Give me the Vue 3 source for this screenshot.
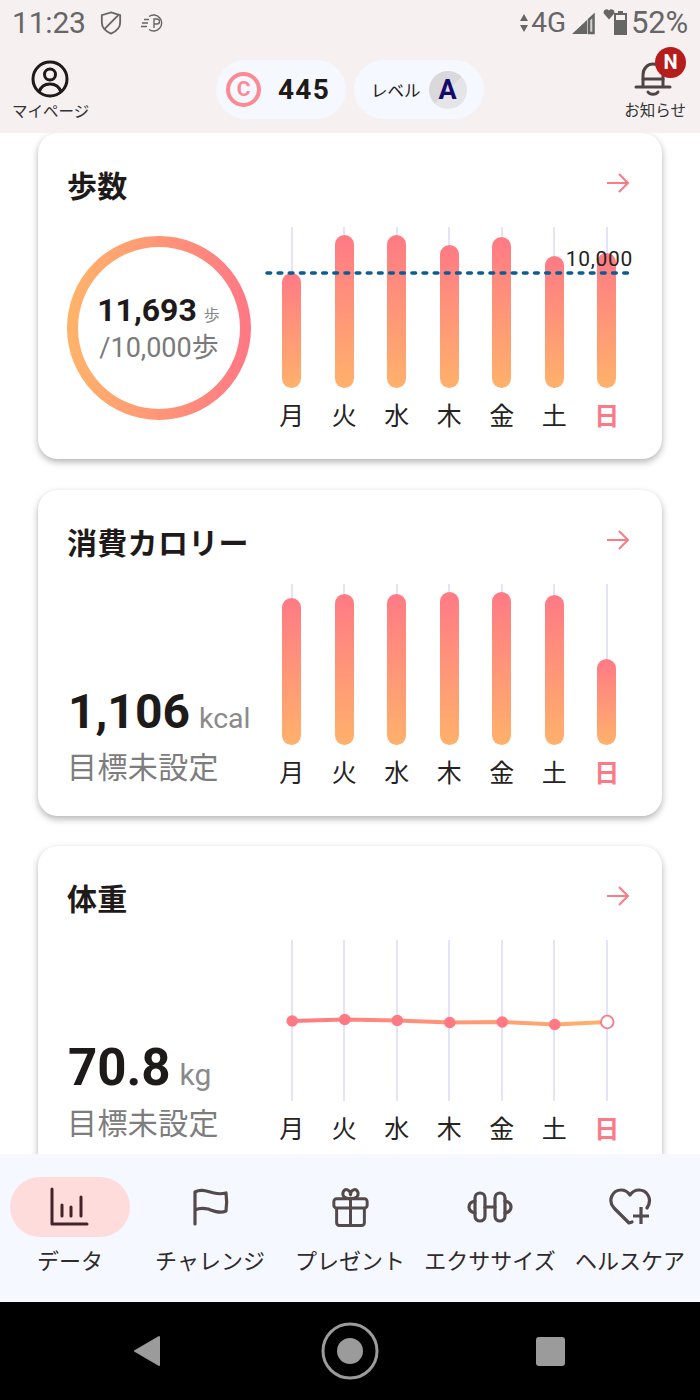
<script setup>
const days = ['月', '火', '水', '木', '金', '土', '日']
const stepBars = [115, 153, 153, 143, 151, 132, 135]
const calBars = [147, 151, 151, 153, 153, 150, 86]
// 体重の折れ線 (x は列の中心)
const weightY = [81, 79.5, 80.5, 82.5, 82, 84.5, 82]
const weightPts = weightY.map((y, i) => ({ x: 26.25 + i * 52.5, y }))
const weightLine = weightPts.map((p) => p.x + ',' + p.y).join(' ')
const tabs = ['データ', 'チャレンジ', 'プレゼント', 'エクササイズ', 'ヘルスケア']
</script>

<template>
  <div class="page">
    <header class="top">
      <div class="status">
        <span class="time">11:23</span>
        <svg class="st-shield" width="22" height="26" viewBox="0 0 24 27" fill="none" stroke="#666" stroke-width="2">
          <path d="M12 2 L22 5 V13 C22 19 17 23 12 25 C7 23 2 19 2 13 V5 Z" />
          <path d="M5 20 L20 5" />
        </svg>
        <svg class="st-p" width="24" height="20" viewBox="0 0 24 20" fill="none" stroke="#666" stroke-width="1.4">
          <path d="M9 3.5 A8 8 0 1 1 9 16.5" />
          <path d="M14 15 V6 H17 A2.5 2.5 0 0 1 17 11 H14" />
          <path d="M4 6.5 H9 M2 10 H8 M1 13.5 H7" />
        </svg>
        <div class="st-right">
          <svg width="10" height="24" viewBox="0 0 10 24" fill="#666"><path d="M5 3 L9 10 H1 Z M1 14 H9 L5 21 Z" /></svg>
          <span class="st-txt">4G</span>
          <svg class="st-signal" width="24" height="24" viewBox="0 0 24 24"><path d="M0 23 L15 9 V23 Z" fill="#666" /><path d="M15 9 L23 1 V23 H15 Z" fill="#666" opacity=".25" /><path d="M21.5 4.5 V22 H17 V8.5 Z" fill="none" stroke="#666" stroke-width="2.4" /></svg>
          <svg class="st-heart" width="12" height="12" viewBox="0 0 12 12" fill="#666"><path d="M6 11.5 L.8 5.5 A3 3 0 0 1 6 2.6 A3 3 0 0 1 11.2 5.5 Z" /></svg>
          <svg width="15" height="24" viewBox="0 0 15 24"><path d="M5 0 H10 V2 H14 V24 H1 V2 H5 Z" fill="#666" /><rect x="3" y="4" width="9" height="5" fill="#f6f0f1" /></svg>
          <span class="st-txt pct">52%</span>
        </div>
      </div>
      <div class="bar">
        <div class="side left">
          <svg class="me" width="40" height="40" viewBox="0 0 40 40" fill="none" stroke="#1e1a1a" stroke-width="3">
            <circle cx="20" cy="20" r="17" />
            <circle cx="20" cy="15.5" r="5.5" />
            <path d="M9 33 C11 27 15 25 20 25 C25 25 29 27 31 33" />
          </svg>
          <span class="side-label">マイページ</span>
        </div>
        <div class="pills">
          <div class="pill coin">
            <span class="coin-mark">C</span>
            <span class="coin-num">445</span>
          </div>
          <div class="pill level">
            <span class="level-txt">レベル</span>
            <span class="level-badge">A</span>
          </div>
        </div>
        <div class="side right">
          <div class="bell">
            <svg width="40" height="40" viewBox="0 0 40 40" fill="none" stroke="#4f4444" stroke-width="3" stroke-linecap="round">
              <path d="M10 28 V17 C10 10 15 6 20 6 C25 6 30 10 30 17 V28" />
              <path d="M3 29 H37" />
              <path d="M10 21 H30" />
              <path d="M15 34 C17 37 23 37 25 34" />
            </svg>
            <span class="badge">N</span>
          </div>
          <span class="side-label">お知らせ</span>
        </div>
      </div>
    </header>

    <main class="list">
      <section class="card">
        <div class="card-head">
          <h2>歩数</h2>
          <svg class="arrow" width="24" height="22" viewBox="0 0 24 22" fill="none" stroke="#fb7a86" stroke-width="2"><path d="M1 11 H22 M13 2 L22 11 L13 20" /></svg>
        </div>
        <div class="card-body mid">
          <div class="ring-box">
            <svg class="ring" width="184" height="184" viewBox="0 0 184 184" fill="none">
              <defs>
                <linearGradient id="ringGrad" x1="0" y1="0" x2="1" y2="0">
                  <stop offset="0" stop-color="#ffb26a" />
                  <stop offset="1" stop-color="#ff7984" />
                </linearGradient>
              </defs>
              <circle cx="92" cy="92" r="86.5" stroke="url(#ringGrad)" stroke-width="11" />
            </svg>
            <div class="ring-main"><b>11,693</b><small>歩</small></div>
            <div class="ring-sub">/10,000歩</div>
          </div>
          <div class="chart">
            <div class="col" v-for="(d, i) in days" :key="d">
              <div class="track"><i class="grid-line"></i><i class="fill" :style="{ height: stepBars[i] + 'px' }"></i></div>
              <span class="day" :class="{ sun: i === 6 }">{{ d }}</span>
            </div>
            <svg class="goal" width="372" height="6" viewBox="0 0 372 6"><path d="M2 3 H362.4" stroke="#0b5c93" stroke-width="3.6" stroke-linecap="round" stroke-dasharray="3.6 7.55" /></svg>
            <span class="goal-txt">10,000</span>
          </div>
        </div>
      </section>

      <section class="card">
        <div class="card-head">
          <h2>消費カロリー</h2>
          <svg class="arrow" width="24" height="22" viewBox="0 0 24 22" fill="none" stroke="#fb7a86" stroke-width="2"><path d="M1 11 H22 M13 2 L22 11 L13 20" /></svg>
        </div>
        <div class="card-body">
          <div class="nums">
            <div class="value"><b>1,106</b><small>kcal</small></div>
            <div class="target">目標未設定</div>
          </div>
          <div class="chart">
            <div class="col" v-for="(d, i) in days" :key="d">
              <div class="track"><i class="grid-line"></i><i class="fill" :style="{ height: calBars[i] + 'px' }"></i></div>
              <span class="day" :class="{ sun: i === 6 }">{{ d }}</span>
            </div>
          </div>
        </div>
      </section>

      <section class="card">
        <div class="card-head">
          <h2>体重</h2>
          <svg class="arrow" width="24" height="22" viewBox="0 0 24 22" fill="none" stroke="#fb7a86" stroke-width="2"><path d="M1 11 H22 M13 2 L22 11 L13 20" /></svg>
        </div>
        <div class="card-body">
          <div class="nums">
            <div class="value big"><b>70.8</b><small>kg</small></div>
            <div class="target">目標未設定</div>
          </div>
          <div class="chart">
            <div class="col" v-for="(d, i) in days" :key="d">
              <div class="track"><i class="grid-line"></i></div>
              <span class="day" :class="{ sun: i === 6 }">{{ d }}</span>
            </div>
            <svg class="weight" width="368" height="161" viewBox="0 0 368 161" fill="none">
              <defs>
                <linearGradient id="lineGrad" gradientUnits="userSpaceOnUse" x1="26" y1="0" x2="341" y2="0">
                  <stop offset="0" stop-color="#ff7984" />
                  <stop offset="1" stop-color="#ffb26a" />
                </linearGradient>
              </defs>
              <polyline :points="weightLine" stroke="url(#lineGrad)" stroke-width="4" />
              <template v-for="(p, i) in weightPts" :key="i">
                <circle v-if="i < 6" :cx="p.x" :cy="p.y" r="5.8" fill="#ff7984" />
                <circle v-else :cx="p.x" :cy="p.y" r="6.3" fill="#fff" stroke="#fb7a86" stroke-width="1.8" />
              </template>
            </svg>
          </div>
        </div>
      </section>
    </main>

    <nav class="tabs">
      <div class="tab" v-for="(t, i) in tabs" :key="t">
        <div class="tab-icon" :class="{ on: i === 0 }">
          <svg v-if="i === 0" width="40" height="40" viewBox="0 0 40 40" fill="none" stroke="#43232a" stroke-width="3" stroke-linecap="round">
            <path d="M2 2 V37 H37" stroke-linejoin="round" />
            <path d="M12 18 V29 M21 20 V29 M31 10 V29" />
          </svg>
          <svg v-else-if="i === 1" width="40" height="40" viewBox="0 0 40 40" fill="none" stroke="#544a4a" stroke-width="3.2" stroke-linecap="round" stroke-linejoin="round">
            <path d="M5 37 V5 C12 1 18 5 24 6 C28 7 32 7 36 6 C37 13 37 18 36 24 C30 27 24 24 18 22 C13 21 9 21 5 23" />
          </svg>
          <svg v-else-if="i === 2" width="37" height="42" viewBox="0 0 40 44" fill="none" stroke="#544a4a" stroke-width="3.2" stroke-linejoin="round">
            <rect x="2" y="13" width="36" height="10" rx="3" />
            <path d="M5 23 V39 A3 3 0 0 0 8 42 H32 A3 3 0 0 0 35 39 V23" />
            <path d="M20 13 V42" />
            <path d="M20 13 C13 13 11 10 12 6 C14 1 20 3 20 9 C20 3 26 1 28 6 C29 10 27 13 20 13 Z" />
          </svg>
          <svg v-else-if="i === 3" width="46" height="32" viewBox="0 0 46 32" fill="none" stroke="#544a4a" stroke-width="3.2" stroke-linecap="round" stroke-linejoin="round">
            <rect x="8" y="2" width="10" height="28" rx="5" />
            <rect x="28" y="2" width="10" height="28" rx="5" />
            <path d="M18 16 H28" />
            <path d="M8 10 C3 11 2 13 2 16 C2 19 3 21 8 22" />
            <path d="M38 10 C43 11 44 13 44 16 C44 19 43 21 38 22" />
          </svg>
          <svg v-else width="44" height="38" viewBox="0 0 44 38" fill="none" stroke="#544a4a" stroke-width="3.2" stroke-linecap="round" stroke-linejoin="round">
            <path d="M24 34 L21 35 L6 20 C-1 12 5 2 13 2 C17 2 20 4 22 7 C24 4 27 2 31 2 C39 2 45 11 39 20" />
            <path d="M33 19 V36 M25 28 H41" stroke-linecap="butt" />
          </svg>
        </div>
        <span class="tab-label">{{ t }}</span>
      </div>
    </nav>

    <footer class="sysnav">
      <svg class="sys-back" width="28" height="32" viewBox="0 0 28 32"><path d="M26 2 V30 L2 16 Z" fill="#9b9b9b" stroke="#9b9b9b" stroke-width="2" stroke-linejoin="round" /></svg>
      <svg width="58" height="58" viewBox="0 0 58 58"><circle cx="29" cy="29" r="27" fill="none" stroke="#9b9b9b" stroke-width="3" /><circle cx="29" cy="29" r="13" fill="#9b9b9b" /></svg>
      <i class="sys-square"></i>
    </footer>
  </div>
</template>

<style scoped>
.page {
  width: 700px;
  height: 1400px;
  display: flex;
  flex-direction: column;
  overflow: hidden;
  background: #fff;
  color: #1f1a1a;
  font-family: Roboto, 'Noto Sans CJK JP', sans-serif;
}

.top { height: 133px; flex: none; background: #f6f0f1; position: relative; z-index: 2; }
.status { height: 45px; display: flex; align-items: center; padding: 0 12px; color: #666; }
.time { font-size: 30px; letter-spacing: -.2px; width: 88px; }
.st-shield { margin-right: 18px; }
.st-right { margin-left: auto; display: flex; align-items: center; }
.st-txt { font-size: 28px; margin: 0 6px 0 2px; }
.st-signal { margin-right: 7px; }
.st-heart { align-self: flex-start; margin-top: 4px; margin-right: -2px; }
.st-txt.pct { font-size: 31px; margin: 0 0 0 3px; letter-spacing: -.2px; }

.bar { display: grid; grid-template-columns: 1fr auto 1fr; align-items: start; padding: 0 14px 0 12px; }
.side { display: flex; flex-direction: column; align-items: center; margin-top: 13px; }
.side.left { justify-self: start; }
.side.right { justify-self: end; }
.me { margin-left: -2px; margin-top: 1px; }
.side-label { font-size: 15.5px; line-height: 22px; color: #333; margin-top: 2px; }
.pills { display: flex; gap: 8px; margin-top: 15px; margin-left: 2px; }
.pill { height: 59px; width: 130px; border-radius: 30px; background: #f5f8fe; display: flex; align-items: center; }
.coin-mark {
  width: 35px; height: 35px; box-sizing: border-box; margin-left: 10px;
  border: 4px solid #fb8a92; border-radius: 50%;
  color: #fb8a92; font-size: 21px; font-weight: 700; line-height: 27px; text-align: center;
}
.coin-num { font-size: 28px; font-weight: 700; letter-spacing: 1.3px; margin-left: 17px; }
.level-txt { font-size: 16.5px; margin-left: 17px; }
.level-badge {
  width: 38px; height: 38px; border-radius: 50%; margin-left: 8px;
  background: linear-gradient(135deg, #d9d9dc 50%, #e5e5e8 50%);
  color: #15086e; font-size: 27px; font-weight: 700; line-height: 38px; text-align: center;
}
.bell { position: relative; width: 40px; height: 40px; margin-left: -4px; }
.badge {
  position: absolute; top: -11px; left: 22px; width: 31px; height: 31px; border-radius: 50%;
  background: #b71c1c; color: #fff; font-size: 20px; font-weight: 700; line-height: 31px; text-align: center;
}

.list { flex: 1; min-height: 0; overflow: hidden; display: flex; flex-direction: column; gap: 30.5px; padding: 0 38px; }
.card {
  flex: none; height: 326px; box-sizing: border-box; background: #fff; border-radius: 20px;
  box-shadow: 0 3px 7px rgba(0, 0, 0, .3); padding: 0 30px;
}
.card-head { height: 94px; display: flex; justify-content: space-between; align-items: center; padding-top: 14px; box-sizing: border-box; }
h2 { margin: 0; font-size: 30px; font-weight: 700; line-height: 40px; margin-left: -1px; letter-spacing: .3px; }
.arrow { margin-right: 2px; margin-top: -8px; }
.card-body { display: flex; align-items: flex-end; justify-content: space-between; margin-right: -1px; }
.card-body.mid { align-items: flex-start; margin-left: -1px; }

.ring-box { width: 184px; height: 184px; position: relative; flex: none; margin-top: 9px; text-align: center; }
.ring { position: absolute; left: 0; top: 0; }
.ring-main { padding-top: 54px; line-height: 40px; padding-right: 1px; white-space: nowrap; }
.ring-main b { font-size: 32px; font-weight: 700; }
.ring-main small { font-size: 16px; color: #888; margin-left: 7px; }
.ring-sub { font-size: 27px; line-height: 38px; color: #7a7a7a; margin-top: -7px; }

.chart { width: 367.5px; display: flex; position: relative; flex: none; }
.col { width: 52.5px; display: flex; flex-direction: column; align-items: center; }
.track { width: 100%; height: 161px; position: relative; }
.grid-line { position: absolute; left: 50%; top: 0; bottom: 0; width: 2px; margin-left: -1px; background: #e3e3fa; }
.fill {
  position: absolute; left: 50%; bottom: 0; width: 19px; margin-left: -9.5px; border-radius: 10px;
  background: linear-gradient(#ff7a85, #ffb16b);
}
.day { font-size: 25px; line-height: 36px; margin-top: 11px; color: #262222; }
.day.sun { color: #fb7a86; font-weight: 700; }
.goal { position: absolute; left: -1px; top: 43px; }
.goal-txt { position: absolute; right: 0; top: 20px; font-size: 21px; line-height: 24px; color: #262222; letter-spacing: .7px; }
.weight { position: absolute; left: 0; top: 0; }

.nums { padding-bottom: 2px; white-space: nowrap; }
.value { height: 56px; line-height: 56px; }
.value b { font-size: 48px; font-weight: 700; }
.value small { font-size: 28.5px; color: #8a8a8a; margin-left: 9px; }
.value.big { margin-top: -1px; margin-bottom: 1px; }
.value.big b { font-size: 51px; }
.value.big small { font-size: 30px; }
.target { font-size: 30px; line-height: 44px; color: #7d7d7d; margin-top: 6px; margin-left: -1px; letter-spacing: .4px; }

.tabs { height: 148px; flex: none; display: flex; background: #f5f8fe; position: relative; z-index: 2; }
.tab { width: 140px; display: flex; flex-direction: column; align-items: center; padding-top: 23px; box-sizing: border-box; }
.tab-icon { width: 120px; height: 60px; border-radius: 30px; display: flex; align-items: center; justify-content: center; }
.tab-icon.on { background: #ffdcdc; }
.tab-label { font-size: 22px; line-height: 32px; margin-top: 9px; color: #2f2a2a; white-space: nowrap; }

.sysnav { height: 98px; flex: none; background: #000; display: flex; align-items: center; padding-left: 133px; }
.sys-back { margin-right: 160px; }
.sys-square { width: 29px; height: 29px; border-radius: 3px; background: #9b9b9b; margin-left: 157px; }
</style>
